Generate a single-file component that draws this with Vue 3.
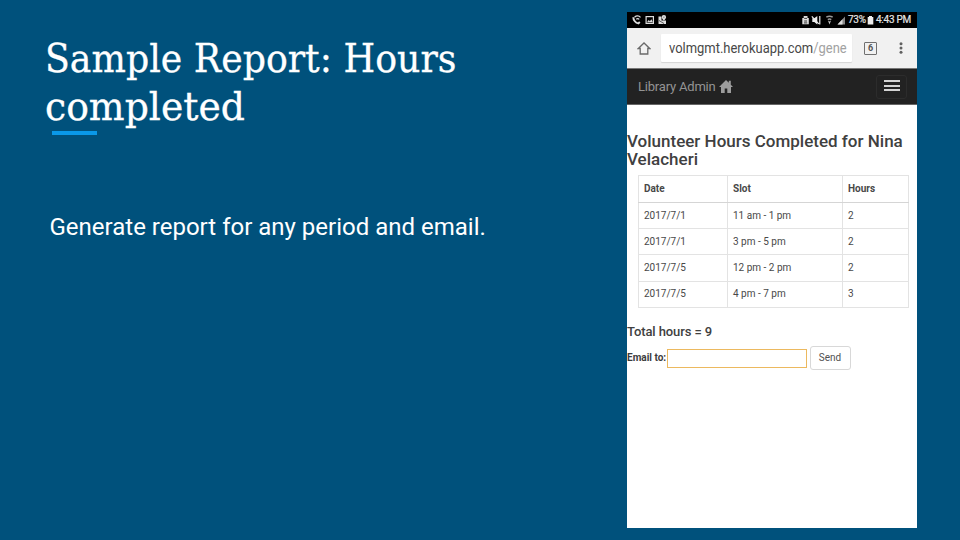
<script setup>
const rows = [
  { date: '2017/7/1', slot: '11 am - 1 pm', hours: 2 },
  { date: '2017/7/1', slot: '3 pm - 5 pm', hours: 2 },
  { date: '2017/7/5', slot: '12 pm - 2 pm', hours: 2 },
  { date: '2017/7/5', slot: '4 pm - 7 pm', hours: 3 },
]
</script>

<template>
  <main class="slide">
    <section class="copy">
      <h1 class="title"><span class="line first">Sample Report: Hours</span><span class="line second">completed</span></h1>
      <div class="accent"></div>
      <p class="body">Generate report for any period and email.</p>
    </section>

    <section class="phone">
      <div class="status">
        <svg class="left-icons" width="38" height="16" viewBox="0 0 38 16">
          <path fill="none" stroke="#ddd" stroke-width="1.900" d="M2.300 5.200c0 3 2.300 5.800 5 6.200L8.800 10" />
          <path fill="none" stroke="#ddd" stroke-width="1.200" d="M3.500 5.200c2-1.800 4.500-1.600 6 .2M5.300 7.200c1-.9 2-.8 2.900.1" />
          <path fill="#ddd" d="M14.500 4h8.500v8h-8.500z" />
          <path fill="#000" d="M15.700 5.200h6.100v5.600h-6.100z" />
          <path fill="#ddd" d="m16 10.300 1.700-2.300 1.200 1.200 1.500-2 1.500 3.100z" />
          <path fill="#ddd" d="M27.500 4.500h3v4h4.500V12h-7.500z" />
          <path fill="#ddd" d="M32.900 3a2.200 2.200 0 0 1 2.200 2.200c0 1.300-2.200 3.300-2.200 3.300s-2.200-2-2.200-3.300A2.200 2.200 0 0 1 32.900 3" />
          <path fill="none" stroke="#000" stroke-width=".6" d="m28 8.500 5 3M32.400 5.200h1" />
        </svg>
        <svg class="right-icons" width="46" height="16" viewBox="0 0 46 16">
          <path fill="#ddd" d="M2.700 4h3.800v2h1.300v6.300H1.300V6h1.400z" />
          <path fill="none" stroke="#111" stroke-width=".8" d="M3.200 6.400h2.800M3.200 9h2.800M3 10.900h3.200" />
          <path fill="#eee" d="M11.300 6.300h2l3-2.300v8.500l-3-2.500h-2z" />
          <path fill="none" stroke="#eee" stroke-width="1.200" d="m10.800 4.300 7 7.500M18.800 4v8.500" />
          <path fill="none" stroke="#999" stroke-width="1.400" d="M25.300 5.200c2-1.200 4.500-1.200 6.400 0M26.800 7.600c1-.6 2.600-.6 3.500 0" />
          <path fill="#ccc" d="m27 8.500 1.500 1 1.500-1-1.500 4z" />
          <path fill="#888" d="M36.500 12.500 44 4.500v8z" />
          <path fill="#ddd" d="m36.500 12.500 5-5.300v5.300z" />
        </svg>
        <span class="percent">73%</span>
        <svg class="battery" width="7" height="16" viewBox="0 0 7 16"><path fill="#eee" d="M2 4h3v1h1.300v7.500H.7V5H2z" /></svg>
        <span class="clock">4:43 PM</span>
      </div>

      <div class="browser">
        <svg class="home" width="14" height="14" viewBox="0 0 14 14"><path fill="none" stroke="#6a6a6a" stroke-width="1.300" d="M1.300 7.500 7 2l5.700 5.500h-1.900V13H3.200V7.500z" /></svg>
        <div class="address"><span class="url">volmgmt.herokuapp.com<em>/gene</em></span></div>
        <div class="tabs">6</div>
        <svg class="dots" width="4" height="12" viewBox="0 0 4 12" fill="#606060"><circle cx="2" cy="1.700" r="1.500" /><circle cx="2" cy="6" r="1.500" /><circle cx="2" cy="10.300" r="1.500" /></svg>
      </div>

      <nav class="navbar">
        <span class="brand">Library Admin</span>
        <svg class="glyph" width="14" height="14" viewBox="0 0 14 14"><path fill="#9d9d9d" d="M7 0 9.800 2.700V.8h2v3.900L14 7h-2v6H8.300V8.500H5.700V13H2V7H0z" /></svg>
        <button class="menu"><i></i><i></i><i></i></button>
      </nav>

      <div class="content">
        <h2 class="heading">Volunteer Hours Completed for Nina<br>Velacheri</h2>
        <table class="report">
          <colgroup><col class="c1"><col class="c2"><col class="c3"></colgroup>
          <thead><tr><th>Date</th><th>Slot</th><th>Hours</th></tr></thead>
          <tbody>
            <tr v-for="(r, i) in rows" :key="i"><td>{{ r.date }}</td><td>{{ r.slot }}</td><td>{{ r.hours }}</td></tr>
          </tbody>
        </table>
        <p class="total">Total hours = 9</p>
        <form class="mail" @submit.prevent>
          <label for="mail">Email to:</label>
          <input id="mail" type="text">
          <button class="send">Send</button>
        </form>
      </div>
    </section>
  </main>
</template>

<style>
body { margin: 0; background: #00517c; }
</style>

<style scoped>
* { box-sizing: border-box; }
.slide { display: flex; width: 960px; height: 540px; background: #00517c; font-family: Roboto, sans-serif; overflow: hidden; padding-top: 12px; }
.copy { width: 627px; padding: 23px 0 0 44.500px; flex: none; color: #fff; }
.title { margin: 0; font: 400 39px/48px "Roboto Slab", "DejaVu Serif", serif; -webkit-text-stroke: .3px #fff; }
.line { display: block; width: max-content; transform-origin: 0 50%; white-space: nowrap; }
.first { transform: scaleX(.931); }
.second { transform: scaleX(.968); }
.accent { width: 45px; height: 4px; margin: -.5px 0 0 7px; background: #0a98e8; }
.body { margin: 78.500px 0 0 5px; font-size: 24px; line-height: 28px; white-space: nowrap; }
.phone { width: 290.400px; height: 516px; flex: none; background: #fff; display: flex; flex-direction: column; color: #3c3c3c; }
.status { height: 16px; display: flex; align-items: center; background: #000; color: #e4e4e4; font-size: 10px; line-height: 16px; padding-left: 4px; white-space: nowrap; letter-spacing: -.25px; -webkit-text-stroke: .2px #e4e4e4; }
.left-icons, .right-icons, .battery { flex: none; }
.right-icons { margin-left: 132px; }
.percent { margin-left: 1px; width: 18px; }
.battery { margin-left: 1px; }
.clock { margin-left: 2px; }
.browser { height: 40px; background: #f1f1f1; display: flex; align-items: center; padding-left: 10px; flex: none; }
.address { width: 191px; height: 28px; margin-left: 10px; background: #fff; border-radius: 1px; box-shadow: 0 1px 1px #d4d4d4; display: flex; align-items: center; padding-left: 8px; }
.url { font-size: 14.500px; color: #484848; white-space: nowrap; transform: scaleX(.893); transform-origin: 0 50%; }
.url em { font-style: normal; color: #a2a2a2; }
.tabs { width: 13px; height: 13px; margin-left: 12px; border: 1.500px solid #707070; border-radius: 1px; font-size: 9px; line-height: 11px; font-weight: 700; text-align: center; color: #555; }
.dots { margin-left: 22px; }
.navbar { height: 37px; background: #222; border-top: 1px solid #777; border-bottom: 1px solid #666; display: flex; align-items: center; padding-left: 11px; flex: none; }
.brand { color: #949494; font-size: 13px; letter-spacing: -.2px; width: 78px; white-space: nowrap; }
.glyph { margin-left: 3px; }
.menu { width: 31px; height: 24px; margin-left: 143px; background: #222; border: 1px solid #2c2c2c; border-radius: 3px; padding: 0 0 2px; display: flex; flex-direction: column; align-items: center; justify-content: center; gap: 2.500px; }
.menu i { display: block; width: 16px; height: 2px; background: #d4d4d4; }
.content { padding-top: 27px; }
.heading { margin: 0; font-size: 17px; line-height: 18px; font-weight: 500; color: #404040; white-space: nowrap; }
.report { width: 270px; margin: 7px 0 0 10.500px; table-layout: fixed; border-collapse: collapse; font-size: 10px; line-height: 14px; color: #484848; }
.c1 { width: 89px; } .c2 { width: 115px; } .c3 { width: 66px; }
.report th, .report td { border: 1px solid #e3e3e3; padding: 0 5.500px; height: 26.200px; text-align: left; }
.report th { height: 27px; font-weight: 700; border-bottom: 1.500px solid #d5d5d5; }
.total { margin: 16.200px 0 0; font-size: 13px; line-height: 15px; letter-spacing: -.1px; font-weight: 500; color: #404040; }
.mail { display: flex; align-items: center; margin-top: 7px; height: 25px; }
.mail label { width: 40px; padding-bottom: 2px; font-size: 10px; font-weight: 700; white-space: nowrap; }
.mail input { width: 140px; height: 19px; border: 1.500px solid #ecb95f; padding: 0; outline: none; background: #fff; }
.send { width: 41px; height: 24px; margin-left: 2.500px; padding: 0 0 2px; border: 1px solid #d8d8d8; border-radius: 3px; background: #fff; font: 400 10px Roboto, sans-serif; color: #505050; }
</style>
